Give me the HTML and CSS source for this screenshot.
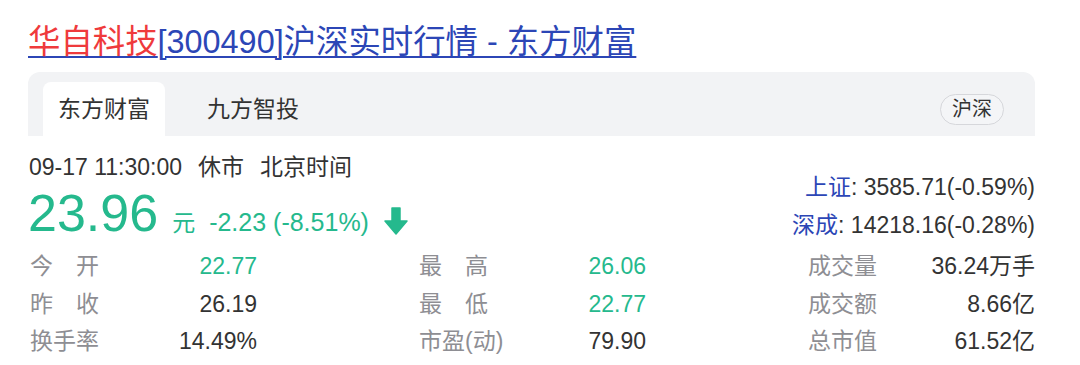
FILE: index.html
```html
<!DOCTYPE html>
<html lang="zh-CN">
<head>
    <meta charset="UTF-8">
    <meta name="viewport" content="width=device-width, initial-scale=1.0">
    <title>华自科技[300490]沪深实时行情 - 东方财富</title>
    <link rel="stylesheet" href="styles.css">
</head>
<body>
    <div class="quote-card">
        <h1 class="quote-title">
            <a href="#"><span class="name">华自科技</span>[300490]沪深实时行情 - 东方财富</a>
        </h1>

        <div class="tab-bar">
            <div class="tab active">东方财富</div>
            <div class="tab">九方智投</div>
            <div class="market-pill">沪深</div>
        </div>

        <div class="quote-head">
            <div class="quote-main">
                <div class="quote-time">09-17 11:30:00<span class="gap">休市</span><span class="gap">北京时间</span></div>
                <div class="quote-price">
                    <span class="price">23.96</span>
                    <span class="unit">元</span>
                    <span class="change">-2.23 (-8.51%)</span>
                    <svg class="arrow" width="24" height="28" viewBox="0 0 24 28">
                        <path d="M8 1 H16 V14 H23 L12 27 L1 14 H8 Z" fill="#25b98d" stroke="#25b98d" stroke-width="1.5" stroke-linejoin="round"/>
                    </svg>
                </div>
            </div>
            <div class="quote-index">
                <div><a href="#">上证</a>: 3585.71(-0.59%)</div>
                <div><a href="#">深成</a>: 14218.16(-0.28%)</div>
            </div>
        </div>

        <div class="quote-stats">
            <div class="stat-col">
                <div class="stat"><span class="label">今开</span><span class="value down">22.77</span></div>
                <div class="stat"><span class="label">昨收</span><span class="value">26.19</span></div>
                <div class="stat"><span class="label">换手率</span><span class="value">14.49%</span></div>
            </div>
            <div class="stat-col">
                <div class="stat"><span class="label">最高</span><span class="value down">26.06</span></div>
                <div class="stat"><span class="label">最低</span><span class="value down">22.77</span></div>
                <div class="stat"><span class="label">市盈(动)</span><span class="value">79.90</span></div>
            </div>
            <div class="stat-col">
                <div class="stat"><span class="label">成交量</span><span class="value">36.24万手</span></div>
                <div class="stat"><span class="label">成交额</span><span class="value">8.66亿</span></div>
                <div class="stat"><span class="label">总市值</span><span class="value">61.52亿</span></div>
            </div>
        </div>
    </div>
</body>
</html>
```

FILE: styles.css
```css
body {
    margin: 0;
    padding: 0;
    background-color: #fff;
    font-family: "Liberation Sans", "Noto Sans CJK SC", sans-serif;
    color: #333;
}

.quote-card {
    width: 1007px;
    padding: 22px 0 0 28px;
}

.quote-title {
    margin: 0;
    font-size: 32.4px;
    font-weight: normal;
    line-height: 40px;
}

.quote-title a {
    color: #2c46b6;
    text-decoration: underline;
    text-underline-offset: 3px;
    text-decoration-thickness: 2px;
}

.quote-title .name {
    color: #ef3a3c;
}

.tab-bar {
    margin-top: 10px;
    height: 54px;
    padding: 10px 31px 0 15px;
    background-color: #f2f3f5;
    border-radius: 12px 12px 0 0;
    display: flex;
    align-items: center;
    gap: 27px;
}

.tab {
    height: 54px;
    line-height: 54px;
    padding: 0 15px;
    font-size: 23px;
    color: #333;
    border-radius: 8px 8px 0 0;
}

.tab.active {
    background-color: #fff;
}

.market-pill {
    margin-left: auto;
    height: 29px;
    line-height: 29px;
    padding: 0 11px;
    font-size: 20px;
    color: #333;
    border: 1.5px solid #d6d7db;
    border-radius: 16px;
    background-color: #f4f5f7;
}

.quote-head {
    display: flex;
    justify-content: space-between;
    align-items: flex-end;
    margin-top: 16px;
}

.quote-time {
    font-size: 23px;
    line-height: 30px;
    padding-left: 1px;
    color: #333;
}

.quote-time .gap {
    margin-left: 16px;
}

.quote-price {
    display: flex;
    align-items: baseline;
    height: 60px;
    padding-top: 2px;
    color: #25b98d;
}

.price {
    font-size: 52px;
    line-height: 58px;
}

.unit {
    font-size: 23px;
    margin-left: 14px;
}

.change {
    font-size: 25px;
    margin-left: 14px;
}

.arrow {
    align-self: center;
    margin-left: 15px;
    margin-top: 14px;
}

.quote-index {
    text-align: right;
    font-size: 23px;
    line-height: 38px;
    margin-bottom: 0;
}

.quote-index a {
    color: #2c46b6;
    text-decoration: none;
}

.quote-stats {
    display: flex;
    justify-content: space-between;
    margin-top: 4px;
}

.stat-col {
    width: 229px;
}

.stat {
    display: flex;
    font-size: 23px;
    line-height: 37.5px;
}

.stat .label {
    width: 69px;
    color: #8e8e93;
    text-align: justify;
    text-align-last: justify;
    white-space: nowrap;
    padding-left: 2px;
}

.stat .value {
    flex: 1;
    text-align: right;
    color: #333;
}

.stat .value.down {
    color: #25b98d;
}
```
